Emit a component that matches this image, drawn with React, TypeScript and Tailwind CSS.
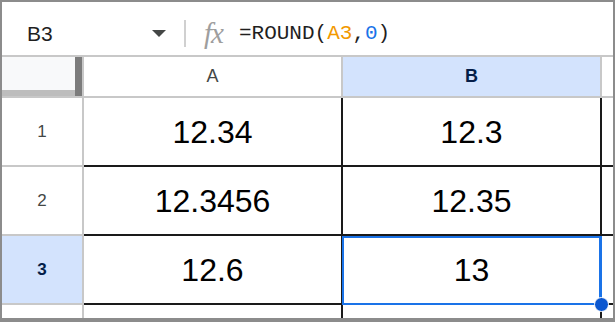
import React from "react";

const sans = { fontFamily: '"Liberation Sans", Arial, sans-serif' };

function Triangle() {
  return (
    <svg width="14" height="7" viewBox="0 0 14 7">
      <path d="M0 0 L14 0 L7 7 Z" fill="#444746" />
    </svg>
  );
}

function BodyRow({
  n,
  a,
  b,
  selected,
}: {
  n: string;
  a: string;
  b: string;
  selected?: boolean;
}) {
  return (
    <div className="flex h-[69px] shrink-0">
      <div
        className={`w-[82px] shrink-0 border-r-2 border-b-2 border-[#c8c8c8] flex items-center justify-center text-[17px] ${
          selected ? "bg-[#d3e3fd] text-[#041e49] font-bold" : "bg-white text-[#444746]"
        }`}
      >
        {n}
      </div>
      <div className="w-[259px] shrink-0 border-r-2 border-b-2 border-[#1a1a1a] flex items-center justify-center text-[32px] text-black">
        {a}
      </div>
      <div className="relative w-[259px] shrink-0 border-r-2 border-b-2 border-[#1a1a1a] flex items-center justify-center text-[32px] text-black">
        {b}
        {selected && (
          <>
            <div className="absolute top-0 left-[-1px] right-[-2px] bottom-[-2px] border-[2px] border-r-[3px] border-[#1a73e8]" />
            <div className="absolute right-[-9px] bottom-[-9px] w-[15px] h-[15px] rounded-full bg-[#0b57d0] border border-white" />
          </>
        )}
      </div>
      <div className="flex-1 border-b-2 border-[#1a1a1a]" />
    </div>
  );
}

export default function App() {
  return (
    <div
      className="w-[615px] h-[322px] bg-white border-l-2 border-t-2 border-r-2 border-b-[4px] border-[#8c8c8c] flex flex-col overflow-hidden"
      style={sans}
    >
      {/* Formula bar */}
      <div className="h-[55px] shrink-0 border-b-2 border-[#c8c8c8] flex items-center pt-[9px]">
        <div className="w-[182px] shrink-0 flex items-center pl-[25px] pr-[18px]">
          <span className="text-[21px] text-[#1f1f1f] leading-none">B3</span>
          <div className="flex-1" />
          <Triangle />
        </div>
        <div className="w-[2px] h-[27px] bg-[#d0d0d0] shrink-0" />
        <span
          className="ml-[18px] text-[29px] italic text-[#9e9e9e] leading-none tracking-[-1px]"
          style={{ fontFamily: '"Liberation Serif", "Times New Roman", serif' }}
        >
          fx
        </span>
        <span
          className="ml-[16px] text-[21px] text-[#1f1f1f] leading-none whitespace-pre"
          style={{ fontFamily: '"Liberation Mono", "Courier New", monospace' }}
        >
          =ROUND(<span className="text-[#f29900]">A3</span>,<span className="text-[#1a73e8]">0</span>)
        </span>
      </div>

      {/* Header row */}
      <div className="flex h-[41px] shrink-0 border-b-2 border-[#c8c8c8]">
        <div className="w-[82px] shrink-0 flex border-r-2 border-[#c8c8c8]">
          <div className="flex-1 flex flex-col">
            <div className="flex-1 bg-[#f8f9fa]" />
            <div className="h-[6px] bg-[#bdbdbd]" />
          </div>
          <div className="w-[7px] bg-[#7c7c7c]" />
        </div>
        <div className="w-[259px] shrink-0 border-r-2 border-[#c8c8c8] flex items-center justify-center text-[18px] text-[#444746]">
          A
        </div>
        <div className="w-[259px] shrink-0 border-r-2 border-[#c8c8c8] bg-[#d3e3fd] flex items-center justify-center text-[18px] font-bold text-[#041e49]">
          B
        </div>
        <div className="flex-1" />
      </div>

      <BodyRow n="1" a="12.34" b="12.3" />
      <BodyRow n="2" a="12.3456" b="12.35" />
      <BodyRow n="3" a="12.6" b="13" selected />
      <div className="flex flex-1">
        <div className="w-[82px] shrink-0 border-r-2 border-[#c8c8c8]" />
        <div className="w-[259px] shrink-0 border-r-2 border-[#1a1a1a]" />
        <div className="w-[259px] shrink-0 border-r-2 border-[#1a1a1a]" />
        <div className="flex-1" />
      </div>
    </div>
  );
}
